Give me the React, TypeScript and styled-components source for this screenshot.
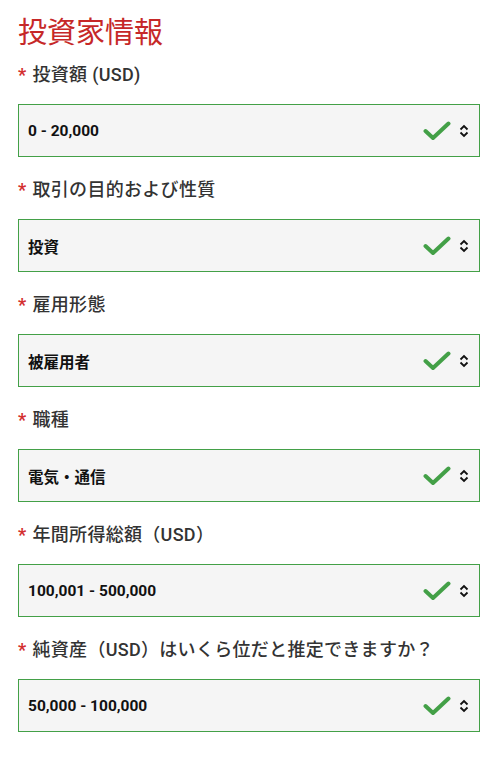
import React from 'react';
import styled, { createGlobalStyle } from 'styled-components';

const GlobalStyle = createGlobalStyle`
  body {
    margin: 0;
    background: #ffffff;
    font-family: Roboto, "Noto Sans CJK JP", sans-serif;
  }
`;

interface IField {
  label: string;
  value: string;
}

const fields: IField[] = [
  { label: '投資額 (USD)', value: '0 - 20,000' },
  { label: '取引の目的および性質', value: '投資' },
  { label: '雇用形態', value: '被雇用者' },
  { label: '職種', value: '電気・通信' },
  { label: '年間所得総額（USD）', value: '100,001 - 500,000' },
  { label: '純資産（USD）はいくら位だと推定できますか？', value: '50,000 - 100,000' },
];

const CheckIcon = () => (
  <svg width="28" height="20" viewBox="0 0 28 20">
    <path d="M2.5 10 L10 17 L25.5 2.5" fill="none" stroke="#43a047" strokeWidth="4" strokeLinecap="round" strokeLinejoin="round" />
  </svg>
);

const SortIcon = () => (
  <svg width="10" height="14" viewBox="0 0 10 14">
    <path d="M1.5 5.5 L5 2 L8.5 5.5 M1.5 8.5 L5 12 L8.5 8.5" fill="none" stroke="#111" strokeWidth="1.8" />
  </svg>
);

export default function App() {
  return (
    <SPage>
      <GlobalStyle />
      <STitle>投資家情報</STitle>
      {fields.map((f) => (
        <SGroup key={f.label}>
          <SLabel>
            <SStar>*</SStar>
            {f.label}
          </SLabel>
          <SSelect>
            <SValue>{f.value}</SValue>
            <SIcons>
              <CheckIcon />
              <SortIcon />
            </SIcons>
          </SSelect>
        </SGroup>
      ))}
    </SPage>
  );
}

const SPage = styled.div`
  display: flex;
  flex-direction: column;
  padding: 15px 20px 0 18px;
`;

const STitle = styled.h1`
  margin: 0 0 12px;
  font-size: 29px;
  line-height: 36px;
  font-weight: 400;
  color: #c62828;
`;

const SGroup = styled.div`
  display: flex;
  flex-direction: column;
  gap: 17px;
  margin-bottom: 21px;
`;

const SLabel = styled.div`
  display: flex;
  align-items: center;
  gap: 6px;
  font-size: 18px;
  line-height: 24px;
  font-weight: 500;
  letter-spacing: 0.3px;
  color: #333333;
`;

const SStar = styled.span`
  color: #d32f2f;
  font-size: 18px;
  font-weight: 700;
`;

const SSelect = styled.div`
  display: flex;
  align-items: center;
  justify-content: space-between;
  height: 53px;
  box-sizing: border-box;
  padding: 0 10px 0 9px;
  background: #f5f5f5;
  border: 1px solid #43a047;
`;

const SValue = styled.span`
  font-size: 15.5px;
  font-weight: 700;
  color: #111111;
`;

const SIcons = styled.div`
  display: flex;
  align-items: center;
  gap: 8px;
`;
